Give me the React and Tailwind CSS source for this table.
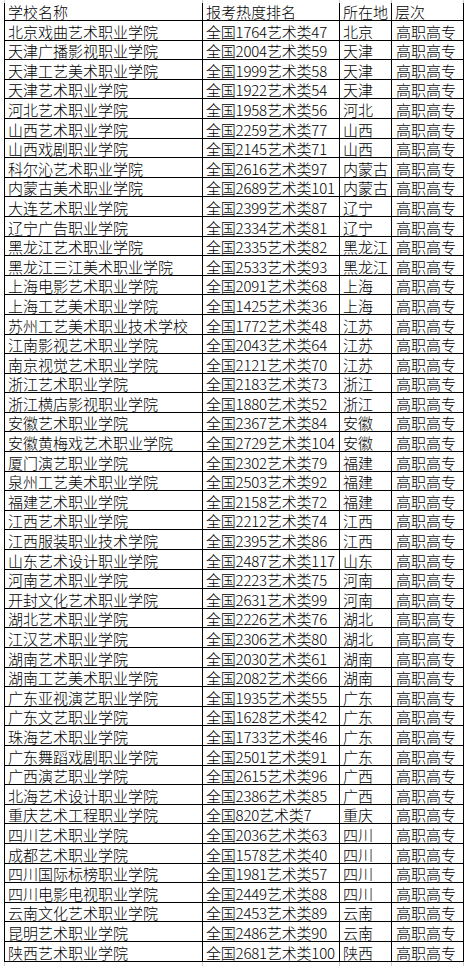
import React from 'react';

const rows = [
  ['北京戏曲艺术职业学院', '全国1764艺术类47', '北京'],
  ['天津广播影视职业学院', '全国2004艺术类59', '天津'],
  ['天津工艺美术职业学院', '全国1999艺术类58', '天津'],
  ['天津艺术职业学院', '全国1922艺术类54', '天津'],
  ['河北艺术职业学院', '全国1958艺术类56', '河北'],
  ['山西艺术职业学院', '全国2259艺术类77', '山西'],
  ['山西戏剧职业学院', '全国2145艺术类71', '山西'],
  ['科尔沁艺术职业学院', '全国2616艺术类97', '内蒙古'],
  ['内蒙古美术职业学院', '全国2689艺术类101', '内蒙古'],
  ['大连艺术职业学院', '全国2399艺术类87', '辽宁'],
  ['辽宁广告职业学院', '全国2334艺术类81', '辽宁'],
  ['黑龙江艺术职业学院', '全国2335艺术类82', '黑龙江'],
  ['黑龙江三江美术职业学院', '全国2533艺术类93', '黑龙江'],
  ['上海电影艺术职业学院', '全国2091艺术类68', '上海'],
  ['上海工艺美术职业学院', '全国1425艺术类36', '上海'],
  ['苏州工艺美术职业技术学校', '全国1772艺术类48', '江苏'],
  ['江南影视艺术职业学院', '全国2043艺术类64', '江苏'],
  ['南京视觉艺术职业学院', '全国2121艺术类70', '江苏'],
  ['浙江艺术职业学院', '全国2183艺术类73', '浙江'],
  ['浙江横店影视职业学院', '全国1880艺术类52', '浙江'],
  ['安徽艺术职业学院', '全国2367艺术类84', '安徽'],
  ['安徽黄梅戏艺术职业学院', '全国2729艺术类104', '安徽'],
  ['厦门演艺职业学院', '全国2302艺术类79', '福建'],
  ['泉州工艺美术职业学院', '全国2503艺术类92', '福建'],
  ['福建艺术职业学院', '全国2158艺术类72', '福建'],
  ['江西艺术职业学院', '全国2212艺术类74', '江西'],
  ['江西服装职业技术学院', '全国2395艺术类86', '江西'],
  ['山东艺术设计职业学院', '全国2487艺术类117', '山东'],
  ['河南艺术职业学院', '全国2223艺术类75', '河南'],
  ['开封文化艺术职业学院', '全国2631艺术类99', '河南'],
  ['湖北艺术职业学院', '全国2226艺术类76', '湖北'],
  ['江汉艺术职业学院', '全国2306艺术类80', '湖北'],
  ['湖南艺术职业学院', '全国2030艺术类61', '湖南'],
  ['湖南工艺美术职业学院', '全国2082艺术类66', '湖南'],
  ['广东亚视演艺职业学院', '全国1935艺术类55', '广东'],
  ['广东文艺职业学院', '全国1628艺术类42', '广东'],
  ['珠海艺术职业学院', '全国1733艺术类46', '广东'],
  ['广东舞蹈戏剧职业学院', '全国2501艺术类91', '广东'],
  ['广西演艺职业学院', '全国2615艺术类96', '广西'],
  ['北海艺术设计职业学院', '全国2386艺术类85', '广西'],
  ['重庆艺术工程职业学院', '全国820艺术类7', '重庆'],
  ['四川艺术职业学院', '全国2036艺术类63', '四川'],
  ['成都艺术职业学院', '全国1578艺术类40', '四川'],
  ['四川国际标榜职业学院', '全国1981艺术类57', '四川'],
  ['四川电影电视职业学院', '全国2449艺术类88', '四川'],
  ['云南文化艺术职业学院', '全国2453艺术类89', '云南'],
  ['昆明艺术职业学院', '全国2486艺术类90', '云南'],
  ['陕西艺术职业学院', '全国2681艺术类100', '陕西'],
];

// column widths as in the sheet: 198 / 137 / 52 / 72
const grid = 'grid grid-cols-[198px_137px_52px_72px]';
const cell = 'flex items-end pl-[3px] pb-[1px] border-r border-black whitespace-nowrap overflow-visible';

function Stub({ h }) {
  return (
    <div className={`${grid} ${h} border-l border-[#d0d0d0]`}>
      <div className="border-r border-[#d0d0d0]" />
      <div className="border-r border-[#d0d0d0]" />
      <div className="border-r border-[#d0d0d0]" />
      <div className="border-r border-[#d0d0d0]" />
    </div>
  );
}

export default function App() {
  return (
    <div className="w-[468px] h-[966px] bg-white text-black overflow-hidden font-['Noto_Sans_CJK_SC',sans-serif] font-light text-[15px] leading-[15px]">
      <div className="ml-[4px] w-[460px]">
        <Stub h="h-[3px]" />
        <div className={`${grid} h-[18px] border-l border-b border-black`}>
          <div className={cell}>学校名称</div>
          <div className={cell}>报考热度排名</div>
          <div className={cell}>所在地</div>
          <div className={cell}>层次</div>
        </div>
        {rows.map((r) => (
          <div key={r[0]} className={`${grid} h-[19.6px] border-l border-b border-black`}>
            <div className={cell}>{r[0]}</div>
            <div className={`${cell} tracking-[-0.2px]`}>{r[1]}</div>
            <div className={cell}>{r[2]}</div>
            <div className={`${cell} pl-[4px]`}>高职高专</div>
          </div>
        ))}
        <Stub h="h-[4px]" />
      </div>
    </div>
  );
}
